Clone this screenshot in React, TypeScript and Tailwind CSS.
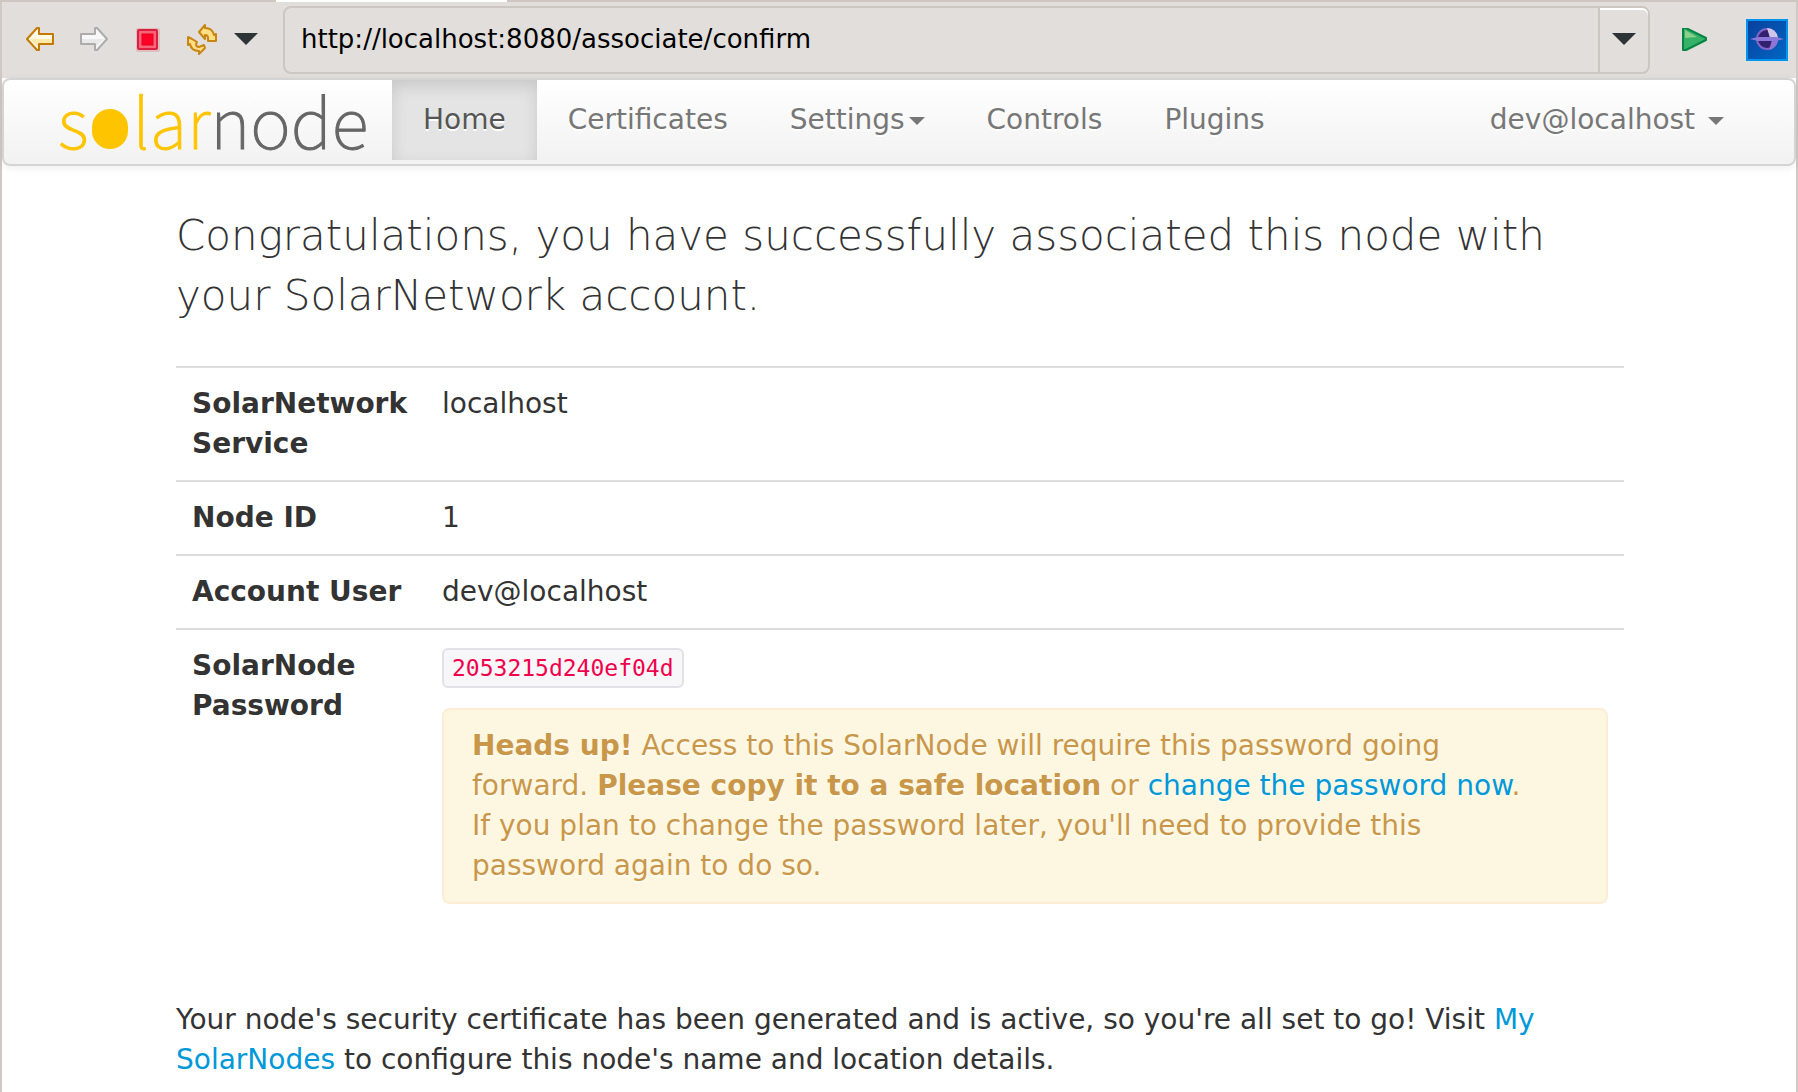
import type { ReactNode } from "react";

const tools = [
  { label: "Back", icon: <BackIcon /> },
  { label: "Forward", icon: <ForwardIcon /> },
  { label: "Stop", icon: <StopIcon /> },
  { label: "Refresh", icon: <RefreshIcon /> },
];

function BackIcon() {
  return (
    <svg width="30" height="30" viewBox="0 1 30 30">
      <path d="M2 15 12 4h2v6h14v10H14v6h-2z" fill="#fffae6" stroke="#c47a00" strokeWidth="2" strokeLinejoin="round" />
      <path d="M5 15h22v4H13v4z" fill="#ffe9a8" />
    </svg>
  );
}

function ForwardIcon() {
  return (
    <svg width="30" height="30" viewBox="0 1 30 30">
      <path d="M28 15 18 4h-2v6H2v10h14v6h2z" fill="#f8f8f8" stroke="#acacac" strokeWidth="2" strokeLinejoin="round" />
      <path d="M25 15H3v4h14v4z" fill="#e9e9e9" />
    </svg>
  );
}

function StopIcon() {
  return (
    <svg width="30" height="30" viewBox="0 1 30 30">
      <rect x="3" y="4" width="24" height="24" rx="2" fill="#d9a9a6" opacity="0.6" />
      <rect x="5" y="6" width="19" height="19" rx="1" fill="#fa6478" stroke="#dc1f40" strokeWidth="2" />
      <rect x="9" y="10" width="11" height="11" fill="#ff0026" stroke="#e0001e" />
    </svg>
  );
}

function RefreshIcon() {
  return (
    <svg width="30" height="32" viewBox="0 1 30 32">
      <g fill="#ffdf85" stroke="#c98512" strokeWidth="2" strokeLinejoin="round">
        <path d="M12 9 18 2v3c5 0 8 2 9 7l2-1v7h-8v-3c0-2-1-3-3-3v4z" />
        <path d="M18 25 12 31v-3c-5 0-8-2-9-7l-2 1v-8l4 2 5 3-1 2c0 2 1 3 3 3l5-2z" />
      </g>
    </svg>
  );
}

function PlayIcon() {
  return (
    <svg width="26" height="24" viewBox="0 1 26 24">
      <path d="M1 1v22h3l20-10v-2L4 1z" fill="#35b268" stroke="#078544" strokeWidth="2" strokeLinejoin="round" />
      <path d="M3 3v8l12-1z" fill="#8ccf8a" />
    </svg>
  );
}

function GlobeIcon() {
  return (
    <svg width="42" height="42" viewBox="0 0 42 42">
      <defs>
        <linearGradient id="sky" x1="0" y1="0" x2="1" y2="1">
          <stop offset="0" stopColor="#0a3f9c" />
          <stop offset="1" stopColor="#0068c4" />
        </linearGradient>
      </defs>
      <rect x="1" y="1" width="40" height="40" fill="url(#sky)" stroke="#0095ee" strokeWidth="2" />
      <circle cx="21" cy="20" r="10" fill="#33206f" stroke="#8064c8" strokeWidth="2" />
      <path d="M21 9a11 11 0 0 1 11 10h-8z" fill="#cfc6ea" />
      <path d="M32 21a11 11 0 0 1-9 10l3-10z" fill="#8f74d4" />
      <path d="M4 20 12 18h18l8 2-8 2H12z" fill="#8c78d8" />
    </svg>
  );
}

function DownArrow() {
  return (
    <svg width="26" height="14" viewBox="0 1 26 14">
      <path d="M1 1h24L13 13z" fill="#2e3436" />
    </svg>
  );
}

function Caret() {
  return <span className="ml-1 inline-block border-x-8 border-t-8 border-x-transparent border-t-[#777777] align-middle" />;
}

function Toolbar() {
  return (
    <div className="flex h-[76px] items-center bg-[#e1dedb] pl-[23px] pr-2">
      <div className="flex items-center gap-6">
        {tools.map((t) => (
          <button key={t.label} type="button" aria-label={t.label}>
            {t.icon}
          </button>
        ))}
      </div>
      <button type="button" aria-label="History" className="ml-4">
        <DownArrow />
      </button>
      <div className="ml-6 flex h-[68px] flex-1 rounded-lg border-2 border-[#cdc7c1]">
        <input
          aria-label="Address"
          defaultValue="http://localhost:8080/associate/confirm"
          className="min-w-0 flex-1 bg-transparent px-4 pb-0.5 text-[26px] text-black outline-none"
        />
        <button
          type="button"
          aria-label="Show addresses"
          className="flex w-[50px] items-center justify-center rounded-r-md border-l-2 border-[#cdc7c1] shadow-[inset_0_2px_0_#ffffff]"
        >
          <DownArrow />
        </button>
      </div>
      <button type="button" aria-label="Go" className="ml-8">
        <PlayIcon />
      </button>
      <button type="button" aria-label="Eclipse" className="ml-[38px]">
        <GlobeIcon />
      </button>
    </div>
  );
}

function Logo() {
  return (
    <a
      href="#"
      aria-label="solarnode"
      className="flex h-20 w-[334px] items-baseline font-['Noto_Sans_CJK_SC',sans-serif] text-[69px] font-thin leading-[78px] [-webkit-text-stroke:1px]"
    >
      <span className="text-[#ffc400]">s</span>
      <span className="mx-1 h-10 w-9 rounded-full bg-[#ffc400]" />
      <span className="text-[#ffc400]">lar</span>
      <span className="text-[#666666]">node</span>
    </a>
  );
}

function NavLink({ active, children }: { active?: boolean; children: ReactNode }) {
  const cls = active
    ? "bg-[#e4e4e4] text-[#555555] shadow-[inset_0_6px_16px_rgba(0,0,0,0.125)]"
    : "text-[#777777]";
  return (
    <li>
      <a href="#" className={`block px-[31px] py-5 leading-10 [text-shadow:0_2px_0_#ffffff] ${cls}`}>
        {children}
      </a>
    </li>
  );
}

function Navbar() {
  return (
    <nav className="flex rounded-lg border-2 border-[#d4d4d4] bg-linear-to-b from-white to-[#f2f2f2] pb-1 pl-[54px] pr-[39px] shadow-[0_2px_8px_rgba(0,0,0,0.067)]">
      <Logo />
      <ul className="flex flex-1">
        <NavLink active>Home</NavLink>
        <NavLink>Certificates</NavLink>
        <NavLink>
          Settings
          <Caret />
        </NavLink>
        <NavLink>Controls</NavLink>
        <NavLink>Plugins</NavLink>
      </ul>
      <ul>
        <NavLink>
          dev@localhost <Caret />
        </NavLink>
      </ul>
    </nav>
  );
}

function Row({ title, children }: { title: string; children: ReactNode }) {
  return (
    <tr className="align-top">
      <th scope="row" className="w-[250px] border-t-2 border-[#dddddd] p-4 text-left font-bold">
        {title}
      </th>
      <td className="border-t-2 border-[#dddddd] p-4">{children}</td>
    </tr>
  );
}

export default function App() {
  return (
    <div className="min-h-screen bg-white font-['DejaVu_Sans',sans-serif] text-[28px] leading-10 text-[#333333]">
      <div className="flex h-[2px] bg-[#cec7c1]">
        <div className="ml-[276px] w-[231px] bg-white" />
      </div>
      <div className="min-h-[calc(100vh-2px)] border-x-2 border-[#d0c8c4]">
        <Toolbar />
        <Navbar />
        <main className="pl-[174px] pr-[172px]">
          <p className="mt-10 text-[42px] font-extralight leading-[60px]">
            Congratulations, you have successfully associated this node with your SolarNetwork account.
          </p>
          <table className="mt-10 w-full border-separate border-spacing-0">
            <tbody>
              <Row title="SolarNetwork Service">localhost</Row>
              <Row title="Node ID">1</Row>
              <Row title="Account User">dev@localhost</Row>
              <Row title="SolarNode Password">
                <div className="flex pt-[2px]">
                  <code className="rounded-md border-2 border-[#e1e1e8] bg-[#f7f7f9] px-2 font-['DejaVu_Sans_Mono',monospace] text-[23px] leading-9 text-[#f0004c]">
                    2053215d240ef04d
                  </code>
                </div>
                <div className="my-5 rounded-lg border-2 border-[#fceed5] bg-[#fdf7e2] py-4 pl-7 pr-[70px] text-[#c9974a] [text-shadow:0_2px_0_rgba(255,255,255,0.5)]">
                  <strong>Heads up!</strong> Access to this SolarNode will require this password going forward.{" "}
                  <strong>Please copy it to a safe location</strong> or{" "}
                  <a href="#" className="text-[#0098d8]">
                    change the password now
                  </a>
                  . If you plan to change the password later, you'll need to provide this password again to do so.
                </div>
              </Row>
            </tbody>
          </table>
          <p className="mt-[60px]">
            Your node's security certificate has been generated and is active, so you're all set to go! Visit{" "}
            <a href="#" className="text-[#0098d8]">
              My SolarNodes
            </a>{" "}
            to configure this node's name and location details.
          </p>
        </main>
      </div>
    </div>
  );
}
